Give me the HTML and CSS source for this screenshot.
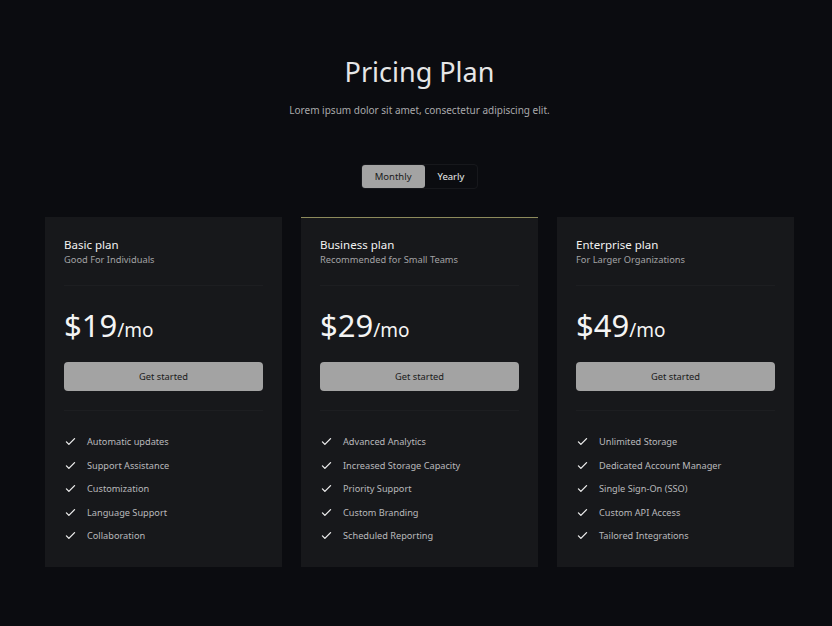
FILE: index.html
```html
<!DOCTYPE html>
<html lang="en">
<head>
  <meta charset="UTF-8">
  <meta name="viewport" content="width=device-width, initial-scale=1.0">
  <title>Pricing Plan</title>
  <link rel="stylesheet" href="styles.css">
</head>
<body>
  <header class="intro">
    <h1>Pricing Plan</h1>
    <p>Lorem ipsum dolor sit amet, consectetur adipiscing elit.</p>
  </header>

  <div class="toggle">
    <button class="toggle-btn active">Monthly</button>
    <button class="toggle-btn">Yearly</button>
  </div>

  <section class="plans">
    <div class="plan">
      <div class="plan-head">
        <h2>Basic plan</h2>
        <p>Good For Individuals</p>
      </div>
      <div class="plan-price">
        <div class="price"><span class="amount">$19</span><span class="per">/mo</span></div>
        <button class="cta">Get started</button>
      </div>
      <ul class="features">
        <li><svg viewBox="0 0 16 16"><path d="M3 8.5l3 3 7-7"/></svg>Automatic updates</li>
        <li><svg viewBox="0 0 16 16"><path d="M3 8.5l3 3 7-7"/></svg>Support Assistance</li>
        <li><svg viewBox="0 0 16 16"><path d="M3 8.5l3 3 7-7"/></svg>Customization</li>
        <li><svg viewBox="0 0 16 16"><path d="M3 8.5l3 3 7-7"/></svg>Language Support</li>
        <li><svg viewBox="0 0 16 16"><path d="M3 8.5l3 3 7-7"/></svg>Collaboration</li>
      </ul>
    </div>

    <div class="plan featured">
      <div class="plan-head">
        <h2>Business plan</h2>
        <p>Recommended for Small Teams</p>
      </div>
      <div class="plan-price">
        <div class="price"><span class="amount">$29</span><span class="per">/mo</span></div>
        <button class="cta">Get started</button>
      </div>
      <ul class="features">
        <li><svg viewBox="0 0 16 16"><path d="M3 8.5l3 3 7-7"/></svg>Advanced Analytics</li>
        <li><svg viewBox="0 0 16 16"><path d="M3 8.5l3 3 7-7"/></svg>Increased Storage Capacity</li>
        <li><svg viewBox="0 0 16 16"><path d="M3 8.5l3 3 7-7"/></svg>Priority Support</li>
        <li><svg viewBox="0 0 16 16"><path d="M3 8.5l3 3 7-7"/></svg>Custom Branding</li>
        <li><svg viewBox="0 0 16 16"><path d="M3 8.5l3 3 7-7"/></svg>Scheduled Reporting</li>
      </ul>
    </div>

    <div class="plan">
      <div class="plan-head">
        <h2>Enterprise plan</h2>
        <p>For Larger Organizations</p>
      </div>
      <div class="plan-price">
        <div class="price"><span class="amount">$49</span><span class="per">/mo</span></div>
        <button class="cta">Get started</button>
      </div>
      <ul class="features">
        <li><svg viewBox="0 0 16 16"><path d="M3 8.5l3 3 7-7"/></svg>Unlimited Storage</li>
        <li><svg viewBox="0 0 16 16"><path d="M3 8.5l3 3 7-7"/></svg>Dedicated Account Manager</li>
        <li><svg viewBox="0 0 16 16"><path d="M3 8.5l3 3 7-7"/></svg>Single Sign-On (SSO)</li>
        <li><svg viewBox="0 0 16 16"><path d="M3 8.5l3 3 7-7"/></svg>Custom API Access</li>
        <li><svg viewBox="0 0 16 16"><path d="M3 8.5l3 3 7-7"/></svg>Tailored Integrations</li>
      </ul>
    </div>
  </section>
</body>
</html>
```

FILE: styles.css
```css
body {
  margin: 0;
  padding-left: 7px; /* page is centred a little right of the window */
  background-color: #0b0c10;
  color: #e8e8e8;
  font-family: "Noto Sans", "Open Sans", sans-serif;
}
.intro {
  text-align: center;
  padding-top: 53px;
}
.intro h1 {
  margin: 0;
  font-size: 27px;
  font-weight: 400;
  color: #e6e6e6;
  line-height: 38px;
}
.intro p {
  margin: 12px 0 0;
  font-size: 10px;
  color: #a9a9ab;
}
.toggle {
  display: flex;
  width: max-content;
  margin: 47px auto 0;
  border: 1px solid #17181c;
  border-radius: 4px;
}
.toggle-btn {
  font-family: inherit;
  font-size: 9.5px;
  height: 23px;
  border: none;
  background: transparent;
  color: #ececec;
  padding: 0 13px;
  border-radius: 3px;
}
.toggle-btn.active {
  background-color: #a3a3a3;
  color: #1a1a1a;
}
.plans {
  display: flex;
  justify-content: center;
  gap: 19px;
  margin-top: 28px;
}
.plan {
  width: 199px;
  height: 309px;
  padding: 19px 19px 21px;
  background-color: #17181b;
  border-top: 1px solid transparent;
}
.plan.featured {
  border-top-color: #8d8b5c;
}
.plan-head {
  padding-bottom: 18px;
  border-bottom: 1px solid #1d1e21;
}
.plan-head h2 {
  margin: 0;
  font-size: 11.5px;
  font-weight: 400;
  color: #f2f2f2;
  line-height: 16px;
}
.plan-head p {
  margin: 0;
  font-size: 9.3px;
  color: #a3a3a5;
  line-height: 14px;
}
.plan-price {
  padding: 19px 0 19px;
  border-bottom: 1px solid #1d1e21;
}
.price {
  line-height: 40px;
  color: #f4f4f4;
}
.amount {
  font-size: 31px;
}
.per {
  font-size: 19px;
}
.cta {
  display: block;
  width: 100%;
  height: 29px;
  margin-top: 11px;
  border: none;
  border-radius: 4px;
  background-color: #a3a3a3;
  color: #1a1a1a;
  font-family: inherit;
  font-size: 9.3px;
}
.features {
  list-style: none;
  margin: 0;
  padding: 19px 0 0;
}
.features li {
  display: flex;
  align-items: center;
  height: 23.5px;
  font-size: 9.2px;
  color: #b9b9bb;
}
.features svg {
  width: 13px;
  height: 13px;
  margin: 0 10px 0 0;
  fill: none;
  stroke: #f0f0f0;
  stroke-width: 1.6;
  stroke-linecap: round;
  stroke-linejoin: round;
}
```
